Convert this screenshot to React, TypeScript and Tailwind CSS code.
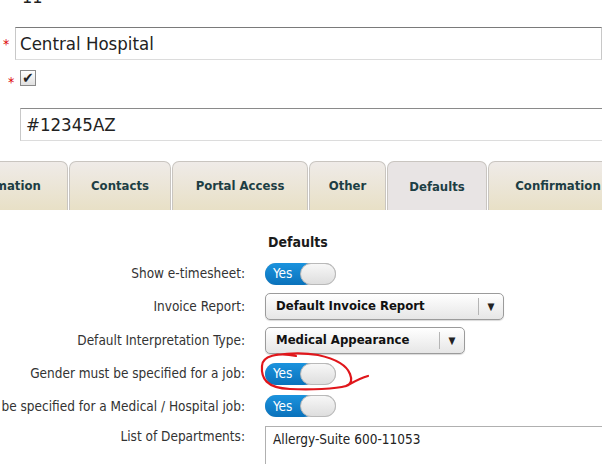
const font = { fontFamily: '"DejaVu Sans Condensed", "DejaVu Sans", Verdana, sans-serif' };

function Toggle() {
  return (
    <div className="relative h-[22px] w-[71px] rounded-full bg-[#dcdcdc] shadow-[inset_0_1px_2px_rgba(0,0,0,0.25)]">
      <div className="absolute left-0 top-0 flex h-[22px] w-[50px] items-center rounded-full bg-gradient-to-b from-[#1b93de] to-[#0a72bb] pl-[8px] text-[13.5px] text-white">
        Yes
      </div>
      <div className="absolute right-0 top-0 h-[22px] w-[36px] rounded-full border border-[#b9b9b9] bg-gradient-to-b from-[#f7f7f7] to-[#dedede]" />
    </div>
  );
}

function Select({ label, width }: { label: string; width: string }) {
  return (
    <div
      className={`flex h-[27px] items-center rounded-[5px] border border-[#9b9b9b] bg-gradient-to-b from-white to-[#e6e6e6] shadow-[0_1px_1px_rgba(0,0,0,0.15)] ${width}`}
    >
      <span className="flex-1 pl-[10px] text-[13px] font-bold text-[#111]">{label}</span>
      <span className="h-[17px] w-px bg-[#b5b5b5]" />
      <span className="flex w-[24px] justify-center text-[10px] text-[#222]">▼</span>
    </div>
  );
}

const tabs = [
  { name: 'Information', w: 'w-[132px]', ml: '-ml-[64px]' },
  { name: 'Contacts', w: 'w-[102px]', ml: '' },
  { name: 'Portal Access', w: 'w-[136px]', ml: '' },
  { name: 'Other', w: 'w-[77px]', ml: '' },
  { name: 'Defaults', w: 'w-[100px]', ml: '', active: true },
  { name: 'Confirmation', w: 'w-[140px]', ml: '' },
];

export default function App() {
  return (
    <div className="relative h-[464px] w-[602px] overflow-hidden bg-white text-[#333]" style={font}>
      <div className="h-[27px] pl-[22px]">
        <div className="relative -top-[14px] text-[18px] leading-[22px] text-[#222]">11</div>
      </div>

      <div className="flex items-center">
        <span className="w-[15px] pl-[3px] text-[14px] leading-none text-[#d00]">*</span>
        <div className="flex h-[33px] flex-1 items-center border border-t-[#7a7a7a] border-l-[#c8c8c8] border-b-[#dcdcdc] border-r-[#c8c8c8] pl-[4px] text-[18.5px] text-[#222]">
          Central Hospital
        </div>
      </div>

      <div className="flex h-[48px] items-start pt-[10px]">
        <span className="w-[20px] pl-[8px] pt-[5px] text-[14px] leading-none text-[#d00]">*</span>
        <div className="flex h-[16px] w-[16px] items-center justify-center border border-[#8a8a8a] bg-gradient-to-b from-white to-[#e0e0e0] text-[15px] font-bold leading-none text-[#222]">
          ✔
        </div>
      </div>

      <div className="pl-[20px]">
        <div className="-mr-[4px] flex h-[33px] items-center border border-t-[#8a8a8a] border-l-[#c8c8c8] border-b-[#dcdcdc] border-r-[#c8c8c8] pl-[5px] text-[18.5px] text-[#222]">
          #12345AZ
        </div>
      </div>

      <div className="mt-[20px] flex h-[49px] items-end gap-[1px] whitespace-nowrap">
        {tabs.map((t) => (
          <div
            key={t.name}
            className={`flex h-[49px] shrink-0 items-center justify-center rounded-t-[7px] border border-b-0 border-[#c9c5c0] text-[13px] font-bold text-[#1d3e44] ${t.w} ${t.ml} ${
              t.active ? 'bg-[#e8e4e4] pt-[2px]' : 'bg-gradient-to-b from-[#efebe8] to-[#e8e0c6]'
            }`}
          >
            {t.name}
          </div>
        ))}
      </div>

      <div className="grid grid-cols-[245px_1fr] gap-x-[20px] text-[13.5px]">
        <div />
        <div className="mb-[8px] mt-[24px] pl-[3px] text-[14px] font-bold leading-[16px] text-[#1a1a1a]">Defaults</div>

        <div className="flex h-[31px] items-center justify-end">Show e-timesheet:</div>
        <div className="flex h-[31px] items-center">
          <Toggle />
        </div>

        <div className="flex h-[34px] items-center justify-end">Invoice Report:</div>
        <div className="flex h-[34px] items-center">
          <Select label="Default Invoice Report" width="w-[239px]" />
        </div>

        <div className="flex h-[34px] items-center justify-end whitespace-nowrap">Default Interpretation Type:</div>
        <div className="flex h-[34px] items-center">
          <Select label="Medical Appearance" width="w-[200px]" />
        </div>

        <div className="flex h-[33px] items-center justify-end whitespace-nowrap">Gender must be specified for a job:</div>
        <div className="flex h-[33px] items-center">
          <Toggle />
        </div>

        <div className="flex h-[32px] items-center justify-end whitespace-nowrap">
          Gender must be specified for a Medical / Hospital job:
        </div>
        <div className="flex h-[32px] items-center">
          <Toggle />
        </div>

        <div className="flex justify-end pt-[4px] leading-[20px]">List of Departments:</div>
        <div className="pt-[4px]">
          <div className="-mr-[4px] h-[60px] border border-[#b0b0b0] px-[7px] pt-[4px] leading-[16px] text-[#222]">
            Allergy-Suite 600-11053
          </div>
        </div>
      </div>

      <svg className="pointer-events-none absolute left-0 top-0" width="602" height="464" viewBox="0 0 602 464" fill="none">
        <path
          d="M296 356 C 278 352, 262 356, 262 366 C 261 378, 266 388, 290 389 C 310 390, 336 389, 346 386 C 352 384, 352 379, 350 374 C 347 366, 336 359, 318 355 C 306 353, 290 353, 276 355 M 346 386 C 352 383, 358 379, 368 376"
          stroke="#e0161b"
          strokeWidth="2.2"
          strokeLinecap="round"
          strokeLinejoin="round"
        />
      </svg>
    </div>
  );
}
